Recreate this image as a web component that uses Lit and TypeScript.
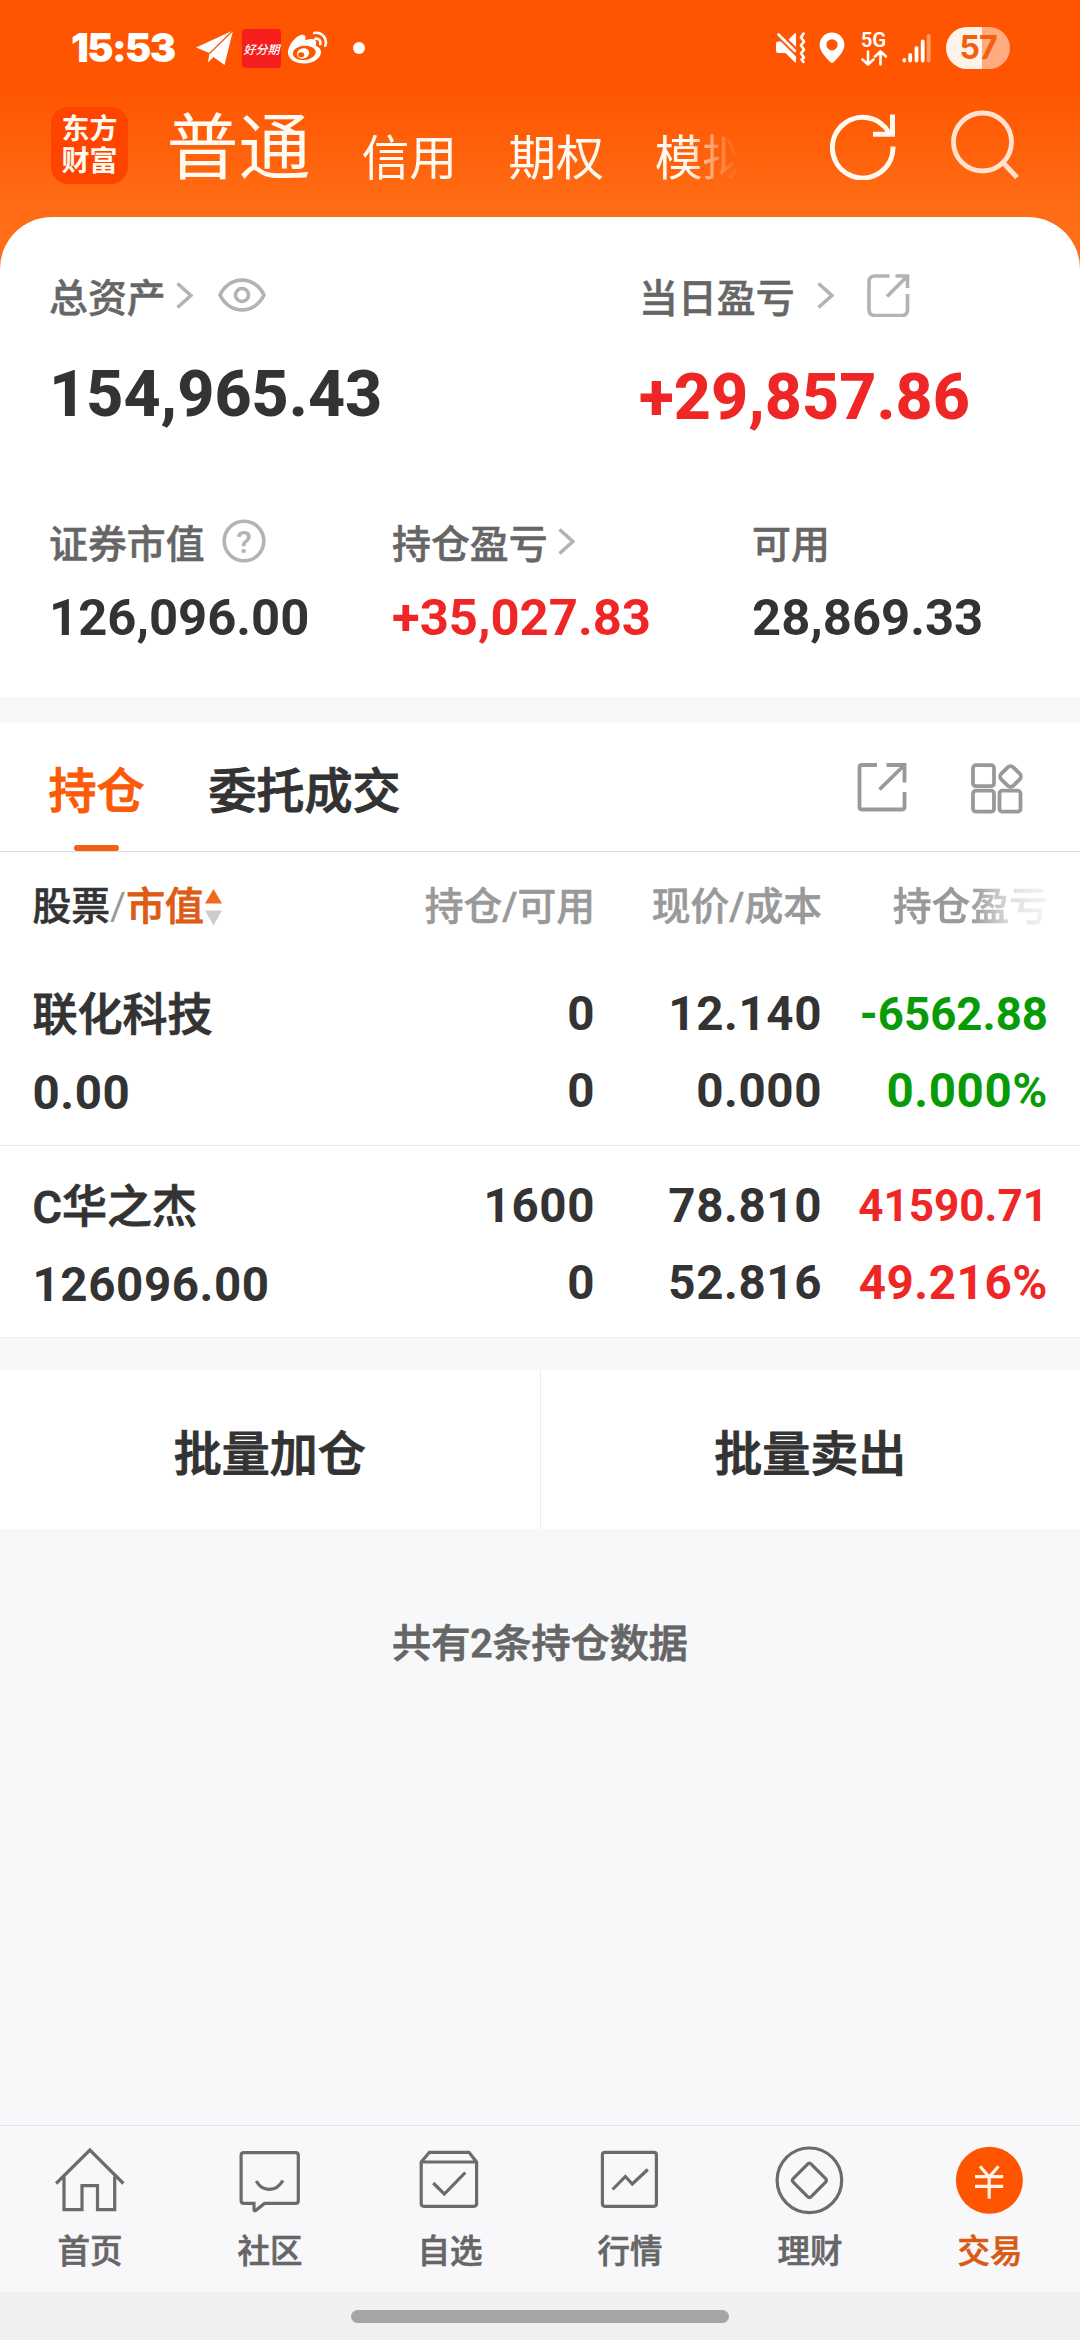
import { LitElement, html, css, svg } from "lit";
import { customElement } from "lit/decorators.js";
import { classMap } from "lit/directives/class-map.js";

interface Holding {
  name: string;
  value: string;
  amount: string;
  usable: string;
  price: string;
  cost: string;
  profit: string;
  ratio: string;
  up: boolean;
  fit: string;
}

const holdings: Holding[] = [
  { name: "联化科技", value: "0.00", amount: "0", usable: "0", price: "12.140", cost: "0.000", profit: "-6562.88", ratio: "0.000%", up: false, fit: "fit-a" },
  { name: "C华之杰", value: "126096.00", amount: "1600", usable: "0", price: "78.810", cost: "52.816", profit: "41590.71", ratio: "49.216%", up: true, fit: "fit-b" },
];

const navItems = [
  {
    label: "首页",
    icon: svg`<path d="M2.1 39.5 35.9 6 69.4 39.5M10 32.5V65.7H28V41.7H43.5V65.7H60.7V32.5"/>`,
  },
  {
    label: "社区",
    icon: svg`<path d="M10 8.7H61.5Q64.3 8.7 64.3 11.5V56.5Q64.3 59.4 61.5 59.4H30.5L21.5 66.6Q20 67.3 20 65.5V59.4H10Q7.1 59.4 7.1 56.5V11.5Q7.1 8.7 10 8.7Z"/><path d="M22.2 37C28.5 48 42 48.5 48.9 36.5"/>`,
  },
  {
    label: "自选",
    icon: svg`<path d="M7.2 18 15.4 8.3H55L62.6 18V59.5Q62.6 62.3 59.8 62.3H10Q7.2 62.3 7.2 59.5ZM7.2 18H62.6M19.2 39 30.3 50 51.3 28.5"/>`,
  },
  {
    label: "行情",
    icon: svg`<rect x="8.4" y="8.3" width="54" height="54" rx="2.5"/><path d="M18.6 45.5 31.4 32.5 38.3 40 53.8 25.5"/>`,
  },
  {
    label: "理财",
    icon: svg`<circle cx="35.4" cy="36.3" r="32.3"/><path d="M33.6 20.2Q35.4 18.2 37.2 20.2L51.6 34.5Q53.2 36.3 51.6 38.1L37.2 52.7Q35.4 54.6 33.6 52.7L19.2 38.1Q17.6 36.3 19.2 34.5Z"/>`,
  },
  {
    label: "交易",
    icon: svg`<circle cx="35.4" cy="36.3" r="33.5" fill="#ff5500" stroke="none"/><path stroke="#fff3ea" d="M26 22.3 35.2 33 44.5 22.3M21 32.7H49.2M21 42.3H49.2M35.2 33V54.7"/>`,
  },
];

const chevron = html`<svg class="chevron" width="17" height="27" viewBox="0 0 17 27"><path d="M1.5 1.5 14.8 13.5 1.5 25.5"/></svg>`;

@customElement("app-root")
export class AppRoot extends LitElement {
  static styles = css`
    :host {
      display: block;
      font-family: Roboto, "Noto Sans CJK SC", sans-serif;
      color: #333;
    }
    svg {
      display: block;
      flex: none;
      fill: none;
    }
    .page {
      display: flex;
      flex-direction: column;
      width: 1080px;
      height: 2340px;
      overflow: hidden;
      background: #f7f8fa;
    }
    .top {
      background: linear-gradient(#ff5500 0, #ff5500 88px, #ff6c15 205px, #ff7018 280px);
    }

    .status {
      display: flex;
      align-items: center;
      height: 96px;
      padding: 0 70px 0 71px;
      box-sizing: border-box;
      color: #fff;
    }
    .clock {
      width: 125px;
      font: 900 39.5px/96px Inter, sans-serif;
      letter-spacing: -1.6px;
    }
    .fenqi {
      width: 39px;
      height: 39px;
      margin-left: 8px;
      border-radius: 4px;
      background: #f51f20;
      font: italic 500 12px/39px "Noto Sans CJK SC", sans-serif;
      text-align: center;
      white-space: nowrap;
    }
    .weibo {
      margin-left: 7px;
    }
    .dot {
      width: 12px;
      height: 12px;
      margin-left: 25px;
      border-radius: 50%;
      background: #fff;
    }
    .mute {
      margin-left: auto;
    }
    .pin {
      margin-left: 13px;
    }
    .net {
      display: flex;
      flex-direction: column;
      align-items: center;
      width: 27px;
      margin-left: 15px;
      font: 600 20.5px/20px Roboto, sans-serif;
    }
    .signal {
      margin-left: 15px;
    }
    .battery {
      width: 64px;
      height: 42px;
      margin-left: 14px;
      border-radius: 21px;
      background: linear-gradient(90deg, #fff2ea 56%, #ffab80 56%);
      color: #f2600f;
      font: 700 32px/42px Inter, sans-serif;
      text-align: center;
      letter-spacing: -1px;
    }

    .titlebar {
      display: flex;
      align-items: center;
      height: 121px;
      padding: 0 61px 0 51px;
      box-sizing: border-box;
      color: #fffaf2;
    }
    .logo {
      width: 77px;
      height: 77px;
      border-radius: 17px;
      margin-bottom: 22px;
      background: #ff4400;
      box-sizing: border-box;
      padding-top: 4px;
      font: 700 28px/32px "Noto Sans CJK SC", sans-serif;
      text-align: center;
    }
    .accounts {
      display: flex;
      align-items: flex-start;
      gap: 51px;
      width: 592px;
      height: 121px;
      margin-left: 38.5px;
      white-space: nowrap;
      font-size: 47.8px;
      line-height: 127px;
      -webkit-mask-image: linear-gradient(90deg, #000 521px, rgba(0, 0, 0, 0.38) 547px, transparent 571px);
      mask-image: linear-gradient(90deg, #000 521px, rgba(0, 0, 0, 0.38) 547px, transparent 571px);
    }
    .accounts .current {
      font-size: 72px;
      line-height: 105px;
    }
    .refresh {
      margin: 0 0 21px auto;
    }
    .search {
      margin: 0 0 23px 53px;
    }

    .card {
      height: 480px;
      box-sizing: border-box;
      padding: 58px 0 0 49px;
      border-radius: 52px 52px 0 0;
      background: #fff;
    }
    .two {
      display: grid;
      grid-template-columns: 590px 1fr;
    }
    .three {
      display: grid;
      grid-template-columns: 343px 360px 1fr;
      margin-top: 86px;
    }
    .label {
      display: flex;
      align-items: center;
      height: 48px;
      font-size: 38.9px;
      line-height: 48px;
      font-weight: 500;
      color: #666;
      -webkit-text-stroke: 0.5px currentColor;
    }
    .label svg {
      stroke: #b3b3b3;
      stroke-width: 3.6;
      margin-bottom: 8px;
    }
    .chevron {
      margin-left: 10px;
    }
    .apart .chevron {
      margin-left: 22.5px;
    }
    .eye {
      margin-left: 25px;
    }
    .apart .share {
      margin-left: 32px;
    }
    .help {
      margin-left: 17px;
    }
    .help text {
      fill: #b3b3b3;
      stroke: none;
      -webkit-text-stroke: 0;
      font: 500 32px Roboto, sans-serif;
    }
    .big {
      margin-top: 33px;
      font-size: 64.5px;
      line-height: 76px;
      font-weight: 800;
    }
    .drop {
      margin-top: 36px;
    }
    .mid {
      margin-top: 19px;
      font-size: 50.8px;
      line-height: 60px;
      font-weight: 700;
    }
    .red {
      color: #ee2626;
    }
    .green {
      color: #079c07;
    }

    .tabs {
      display: flex;
      height: 129px;
      margin-top: 26px;
      padding: 0 55px 0 48.5px;
      box-sizing: border-box;
      border-bottom: 1px solid #dcdcdc;
      background: #fff;
      font-size: 48px;
      font-weight: 500;
    }
    .tab {
      display: flex;
      flex-direction: column;
      align-items: center;
      margin-right: 64px;
      padding-top: 36px;
      line-height: 66px;
      -webkit-text-stroke: 1px currentColor;
    }
    .tab.on {
      color: #fb5a08;
    }
    .tab.on::after {
      content: "";
      width: 45px;
      height: 6px;
      margin-top: 20px;
      border-radius: 3px;
      background: #f25f10;
    }
    .tools {
      display: flex;
      gap: 60px;
      margin: 38px 0 0 auto;
    }
    .tools svg {
      stroke: #999;
      stroke-width: 3.8;
    }

    .cols {
      display: grid;
      grid-template-columns: 1fr 220px 227px 226px;
      padding: 0 32px 0 32.5px;
      background: #fff;
      text-align: right;
      white-space: nowrap;
    }
    .head {
      height: 102px;
      font-size: 38.8px;
      line-height: 110px;
      font-weight: 500;
      color: #999;
      -webkit-text-stroke: 0.5px currentColor;
    }
    .sort {
      display: flex;
      align-items: center;
      height: 110px;
    }
    .sort .dark {
      color: #333;
      -webkit-text-stroke: 0.6px #333;
    }
    .sort .slash {
      font-weight: 400;
      -webkit-text-stroke: 0;
    }
    .sort .hot {
      color: #dd5c14;
      -webkit-text-stroke: 0.8px #dd5c14;
    }
    .fade {
      height: 102px;
      -webkit-mask-image: linear-gradient(90deg, #000 66%, rgba(0, 0, 0, 0.3) 84%, rgba(0, 0, 0, 0.1));
      mask-image: linear-gradient(90deg, #000 66%, rgba(0, 0, 0, 0.3) 84%, rgba(0, 0, 0, 0.1));
    }
    .row {
      height: 192px;
      padding-top: 22px;
      box-sizing: border-box;
      border-bottom: 1px solid #ececee;
      font-size: 47.5px;
      line-height: 77px;
      font-weight: 700;
      letter-spacing: 0.6px;
    }
    .who {
      padding-top: 2px;
      text-align: left;
    }
    .name {
      margin: -1px 0 1px;
      font-size: 45px;
      font-weight: 500;
      letter-spacing: 0;
      -webkit-text-stroke: 0.9px currentColor;
    }
    .fit-a {
      font-size: 45.6px;
      letter-spacing: 0;
    }
    .fit-b {
      font-size: 44.1px;
      letter-spacing: 0;
    }

    .actions {
      display: flex;
      height: 159px;
      margin-top: 32px;
      background: #fff;
    }
    .action {
      flex: 1;
      box-sizing: border-box;
      padding-top: 5px;
      text-align: center;
      font-size: 48px;
      line-height: 159px;
      font-weight: 500;
      -webkit-text-stroke: 1px currentColor;
    }
    .action:first-child {
      border-right: 1px solid #ececee;
    }
    .note {
      margin-top: 85px;
      text-align: center;
      font-size: 39.1px;
      line-height: 60px;
      font-weight: 500;
      color: #666;
      -webkit-text-stroke: 0.8px currentColor;
    }

    .nav {
      display: grid;
      grid-template-columns: repeat(6, 1fr);
      height: 167px;
      margin-top: auto;
      padding-top: 18px;
      box-sizing: border-box;
      border-top: 1px solid #e3e5e8;
      background: #f8f8fb;
    }
    .item {
      display: flex;
      flex-direction: column;
      align-items: center;
      gap: 16px;
      font-size: 32.5px;
      line-height: 40px;
      font-weight: 500;
      color: #666;
      -webkit-text-stroke: 0.6px currentColor;
    }
    .item svg {
      stroke: #6b6b6b;
      stroke-width: 3.2;
    }
    .item.on {
      color: #d95a14;
    }
    .gesture {
      height: 48px;
      padding-top: 18px;
      box-sizing: border-box;
      background: #f0f0f2;
    }
    .handle {
      width: 378px;
      height: 13px;
      margin: 0 auto;
      border-radius: 7px;
      background: #a6a6a8;
    }
  `;

  private statusBar() {
    return html`
      <div class="status">
        <span class="clock">15:53</span>
        <svg width="38" height="38" viewBox="0 0 38 38">
          <path fill="#fff" d="M0 18.5 37 1.5 13.5 24Z" />
          <path fill="#fff" d="M37 1.5 28.5 36 17.5 28 12 33.5 13.5 24Z" />
          <path stroke="#ff5500" stroke-width="1.2" d="M37 1.5 13.5 24.5" />
        </svg>
        <span class="fenqi">好分期</span>
        <svg class="weibo" width="40" height="34" viewBox="0 0 40 34">
          <path fill="#fff" fill-rule="evenodd" d="M14.5 3.8C17.5 4 18 6.5 17.2 9.3 21.5 7.6 26.8 7 28 10.3 28.5 12 28 13.5 27.6 14.7 31 15.8 33 18 33 21 33 27 25.5 32.5 16.2 32.5 7 32.5 0 28 0 21.5 0 14.5 8.5 3.8 14.5 3.8ZM15.5 14.8C9.5 15.3 4.6 18.7 4.9 23 5.2 27 10.5 29.6 16.5 29 22.5 28.5 28 25 27.7 20.7 27.4 16.7 21.5 14.2 15.5 14.8Z" />
          <path fill="#fff" fill-rule="evenodd" d="M15 17.3C10.5 18 8.4 21.5 9.3 24.6 10.3 27.7 14 28.6 17.5 27 20.7 25.5 22 22 20.5 19.6 19.5 17.8 17.5 16.9 15 17.3ZM13.3 21.4A2.6 2.5 0 1 1 13.2 26.3 2.6 2.5 0 1 1 13.3 21.4Z" />
          <path stroke="#fff" stroke-width="2.6" stroke-linecap="round" d="M27.3 7.7C30.5 7 33.3 10 32.2 13.2M26.2 2C33.5 .6 39.8 7 37.3 14.7" />
        </svg>
        <span class="dot"></span>
        <svg class="mute" width="30" height="32" viewBox="0 0 30 32">
          <path fill="#fff" d="M2 9.5H5L20 24.5V29.5Q20 31.5 18.5 30L9.5 21H2Q0 21 0 19V11.500Q0 9.500 2 9.500ZM12.500 7.500 18.500 1.500Q20 .4 20 2.200V15Z" />
          <path stroke="#fff" stroke-width="2.6" stroke-linecap="round" d="M2.500 2.500 19 19" />
          <path stroke="#fff" stroke-width="2.6" stroke-linecap="round" stroke-linejoin="round" d="M27.5 1.5 25 5.5 28 9.5 25 13.5 28 17.5 25 21.500 28 25.500 25.500 27.500 27.500 30" />
        </svg>
        <svg class="pin" width="26" height="32" viewBox="0 0 26 32">
          <path fill="#fff" fill-rule="evenodd" d="M13 .5A12.4 12.4 0 0 1 25.4 13C25.4 20 17.5 27 14.5 30.3Q13 31.5 11.5 30.3C8.5 27 .6 20 .6 13A12.4 12.4 0 0 1 13 .5ZM13 7.2A5.6 5.6 0 1 0 13 18.4 5.6 5.6 0 1 0 13 7.2Z" />
        </svg>
        <div class="net">
          <span>5G</span>
          <svg width="26" height="16" viewBox="0 0 26 16">
            <path stroke="#fff" stroke-width="2.6" stroke-linecap="round" d="M7 1.5V14M1.5 9.5 7 14.5 12.5 9.5M19.5 14.5V2M14 6.5 19.5 1.5 25 6.5" />
          </svg>
        </div>
        <svg class="signal" width="30" height="30" viewBox="0 0 30 30">
          <path stroke="#fff" stroke-width="3.8" stroke-linecap="round" d="M2.3 27V27.5M8.2 22V27.5M14.5 15V27.5M20.7 8.5V27.5" />
          <path stroke="#ff9b66" stroke-width="3.8" stroke-linecap="round" d="M26.7 3V27.5" />
        </svg>
        <span class="battery">57</span>
      </div>
    `;
  }

  private titleBar() {
    return html`
      <div class="titlebar">
        <div class="logo">东方<br />财富</div>
        <div class="accounts">
          <span class="current">普通</span><span>信用</span><span>期权</span><span>模拟</span>
        </div>
        <svg class="refresh" width="68" height="68" viewBox="0 0 68 68" stroke="#fffaf2" stroke-width="5">
          <path d="M63 34.5A30.3 30.3 0 1 1 59.5 21.5" />
          <path d="M62.5 2.5V22.2H43" />
        </svg>
        <svg class="search" width="68" height="70" viewBox="0 0 68 70" stroke="#ffe3d0" stroke-width="4.8">
          <circle cx="31.5" cy="32" r="29" />
          <path d="M51.5 52 66 67.5" />
        </svg>
      </div>
    `;
  }

  private summary() {
    return html`
      <div class="card">
        <div class="two">
          <div>
            <div class="label">
              总资产${chevron}
              <svg class="eye" width="48" height="34" viewBox="0 0 48 34">
                <path d="M2 17C11.5-2.8 36.5-2.8 46 17 36.5 36.8 11.5 36.8 2 17Z" />
                <circle cx="24" cy="17" r="6.5" />
              </svg>
            </div>
            <div class="big">154,965.43</div>
          </div>
          <div>
            <div class="label apart">
              当日盈亏${chevron}
              <svg class="share" width="44" height="44" viewBox="0 0 44 44">
                <path d="M23.5 3H9Q3 3 3 9V36.5Q3 42.5 9 42.5H35.5Q41.5 42.5 41.5 36.5V21M29.5 3H41.5V15M41.5 3 21 23.5" />
              </svg>
            </div>
            <div class="big drop red">+29,857.86</div>
          </div>
        </div>
        <div class="three">
          <div>
            <div class="label">
              证券市值
              <svg class="help" width="44" height="44" viewBox="0 0 44 44">
                <circle cx="22" cy="22" r="19.8" />
                <text x="22" y="33.5" text-anchor="middle">?</text>
              </svg>
            </div>
            <div class="mid">126,096.00</div>
          </div>
          <div>
            <div class="label">持仓盈亏${chevron}</div>
            <div class="mid red">+35,027.83</div>
          </div>
          <div>
            <div class="label">可用</div>
            <div class="mid">28,869.33</div>
          </div>
        </div>
      </div>
    `;
  }

  private holdingRow(h: Holding) {
    const tone = { red: h.up, green: !h.up };
    return html`
      <div class="cols row">
        <div class="who">
          <div class="name">${h.name}</div>
          <div>${h.value}</div>
        </div>
        <div>
          <div>${h.amount}</div>
          <div>${h.usable}</div>
        </div>
        <div>
          <div>${h.price}</div>
          <div>${h.cost}</div>
        </div>
        <div class=${classMap(tone)}>
          <div class=${h.fit}>${h.profit}</div>
          <div>${h.ratio}</div>
        </div>
      </div>
    `;
  }

  render() {
    return html`
      <div class="page">
        <div class="top">${this.statusBar()}${this.titleBar()}${this.summary()}</div>
        <div class="tabs">
          <div class="tab on">持仓</div>
          <div class="tab">委托成交</div>
          <div class="tools">
            <svg width="54" height="54" viewBox="0 0 54 54">
              <path d="M22 4H7Q4.5 4 4.5 6.5V46Q4.5 48.5 7 48.5H47Q49.5 48.5 49.5 46V31M31.5 4H49.5V21.5M49.5 4 24.5 28.5" />
            </svg>
            <svg width="56" height="54" viewBox="0 0 56 54">
              <rect x="4" y="4.2" width="21" height="21" rx="3" />
              <rect x="4" y="29.7" width="21" height="21" rx="3" />
              <rect x="30.5" y="29.7" width="21" height="21" rx="3" />
              <rect x="33" y="7" width="17" height="17" rx="4" transform="rotate(45 41.5 15.5)" />
            </svg>
          </div>
        </div>
        <div class="cols head">
          <div class="sort">
            <span class="dark">股票</span><span class="slash">/</span><span class="hot">市值</span>
            <svg width="19" height="38" viewBox="0 0 19 38">
              <path fill="#f26a1b" d="M9.5 1 18 15.5H1Z" />
              <path fill="#ccc" d="M1 22.5H18L9.5 37.5Z" />
            </svg>
          </div>
          <div>持仓/可用</div>
          <div>现价/成本</div>
          <div class="fade">持仓盈亏</div>
        </div>
        ${holdings.map((h) => this.holdingRow(h))}
        <div class="actions">
          <div class="action">批量加仓</div>
          <div class="action">批量卖出</div>
        </div>
        <div class="note">共有2条持仓数据</div>
        <div class="nav">
          ${navItems.map(
            (n, i) => html`
              <div class=${classMap({ item: true, on: i === 5 })}>
                <svg width="72" height="72" viewBox="0 0 72 72">${n.icon}</svg>
                <span>${n.label}</span>
              </div>
            `
          )}
        </div>
        <div class="gesture"><div class="handle"></div></div>
      </div>
    `;
  }
}
